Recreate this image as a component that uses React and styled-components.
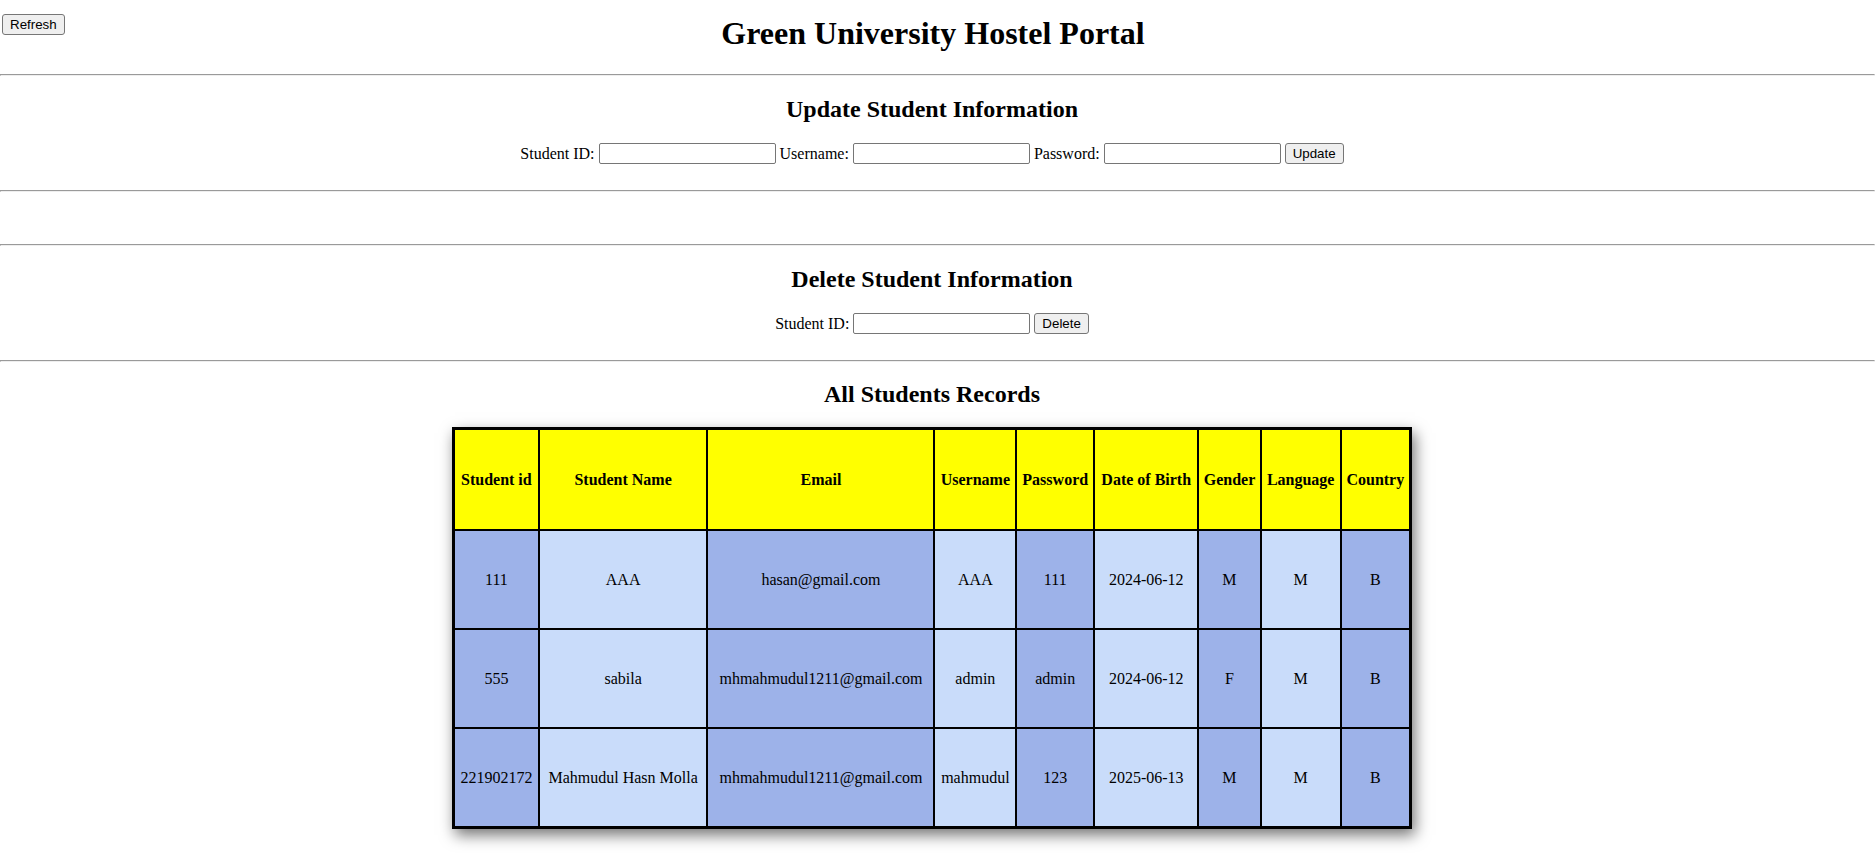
import React from "react";
import styled, { createGlobalStyle } from "styled-components";

const GlobalStyle = createGlobalStyle`
  html, body {
    margin: 0;
    padding: 0;
    background: #ffffff;
  }
  body {
    font-family: "Liberation Serif", "Times New Roman", serif;
    font-size: 16px;
    color: #000000;
  }
`;

const students = [
  {
    id: "111",
    name: "AAA",
    email: "hasan@gmail.com",
    username: "AAA",
    password: "111",
    dob: "2024-06-12",
    gender: "M",
    language: "M",
    country: "B",
  },
  {
    id: "555",
    name: "sabila",
    email: "mhmahmudul1211@gmail.com",
    username: "admin",
    password: "admin",
    dob: "2024-06-12",
    gender: "F",
    language: "M",
    country: "B",
  },
  {
    id: "221902172",
    name: "Mahmudul Hasn Molla",
    email: "mhmahmudul1211@gmail.com",
    username: "mahmudul",
    password: "123",
    dob: "2025-06-13",
    gender: "M",
    language: "M",
    country: "B",
  },
];

const columns = [
  ["id", "Student id"],
  ["name", "Student Name"],
  ["email", "Email"],
  ["username", "Username"],
  ["password", "Password"],
  ["dob", "Date of Birth"],
  ["gender", "Gender"],
  ["language", "Language"],
  ["country", "Country"],
];

const Header = styled.header`
  display: grid;
  grid-template-columns: 1fr auto 1fr;
  align-items: start;
  padding: 14px 11px 22px 2px;
`;

const Title = styled.h1`
  grid-column: 2;
  margin: 1px 0 0;
  font-size: 32px;
  line-height: 37px;
  font-weight: bold;
  text-align: center;
`;

const Button = styled.button`
  height: 21px;
  padding: 1px 7px;
  font-family: "Liberation Sans", Arial, sans-serif;
  font-size: 13.333px;
  color: #000000;
  background: #efefef;
  border: 1px solid #767676;
  border-radius: 3px;
  cursor: pointer;
`;

const RefreshButton = styled(Button)`
  grid-column: 1;
  grid-row: 1;
  justify-self: start;
`;

const Rule = styled.hr`
  margin: 0;
`;

const Section = styled.section`
  padding: ${(props) => (props.$records ? "18px 11px 24px 0" : "19px 11px 26px 0")};
  display: flex;
  flex-direction: column;
  align-items: center;
`;

const SectionTitle = styled.h2`
  margin: 0 0 ${(props) => (props.$records ? "19px" : "20px")};
  font-size: 24px;
  line-height: 28px;
  font-weight: bold;
`;

const FormRow = styled.form`
  display: flex;
  align-items: center;
  justify-content: center;
  gap: 4px;
  height: 21px;
  margin: 0;
`;

const Label = styled.label`
  font-size: 16px;
  line-height: 18px;
`;

const Input = styled.input`
  box-sizing: border-box;
  width: 177px;
  height: 21px;
  padding: 1px 2px;
  font-family: "Liberation Sans", Arial, sans-serif;
  font-size: 13.333px;
  border: 1px solid #767676;
  border-radius: 2px;
  background: #ffffff;
`;

const MessageArea = styled.div`
  height: 52px;
`;

const Table = styled.table`
  width: 960px;
  border-collapse: collapse;
  border: 3px solid #000000;
  box-shadow: 3px 6px 14px rgba(0, 0, 0, 0.55);
`;

const HeadCell = styled.th`
  height: 95px;
  padding: 2px;
  border: 2px solid #000000;
  background: #ffff00;
  font-size: 16px;
  font-weight: bold;
  text-align: center;
  white-space: nowrap;
`;

const Cell = styled.td`
  height: 93px;
  padding: 2px;
  border: 2px solid #000000;
  background: ${(props) => (props.$odd ? "#9db2e9" : "#c9dcfa")};
  font-size: 16px;
  text-align: center;
  white-space: nowrap;
`;

const UpdateForm = () => (
  <FormRow onSubmit={(e) => e.preventDefault()}>
    <Label htmlFor="update-id">Student ID:</Label>
    <Input id="update-id" type="text" />
    <Label htmlFor="update-username">Username:</Label>
    <Input id="update-username" type="text" />
    <Label htmlFor="update-password">Password:</Label>
    <Input id="update-password" type="password" />
    <Button type="submit">Update</Button>
  </FormRow>
);

const DeleteForm = () => (
  <FormRow onSubmit={(e) => e.preventDefault()}>
    <Label htmlFor="delete-id">Student ID:</Label>
    <Input id="delete-id" type="text" />
    <Button type="submit">Delete</Button>
  </FormRow>
);

const App = () => (
  <>
    <GlobalStyle />
    <Header>
      <Title>Green University Hostel Portal</Title>
      <RefreshButton type="button">Refresh</RefreshButton>
    </Header>
    <Rule />
    <Section>
      <SectionTitle>Update Student Information</SectionTitle>
      <UpdateForm />
    </Section>
    <Rule />
    <MessageArea />
    <Rule />
    <Section>
      <SectionTitle>Delete Student Information</SectionTitle>
      <DeleteForm />
    </Section>
    <Rule />
    <Section $records>
      <SectionTitle $records>All Students Records</SectionTitle>
      <Table>
        <thead>
          <tr>
            {columns.map(([key, label]) => (
              <HeadCell key={key}>{label}</HeadCell>
            ))}
          </tr>
        </thead>
        <tbody>
          {students.map((student) => (
            <tr key={student.id}>
              {columns.map(([key], index) => (
                <Cell key={key} $odd={index % 2 === 0}>
                  {student[key]}
                </Cell>
              ))}
            </tr>
          ))}
        </tbody>
      </Table>
    </Section>
  </>
);

export default App;
